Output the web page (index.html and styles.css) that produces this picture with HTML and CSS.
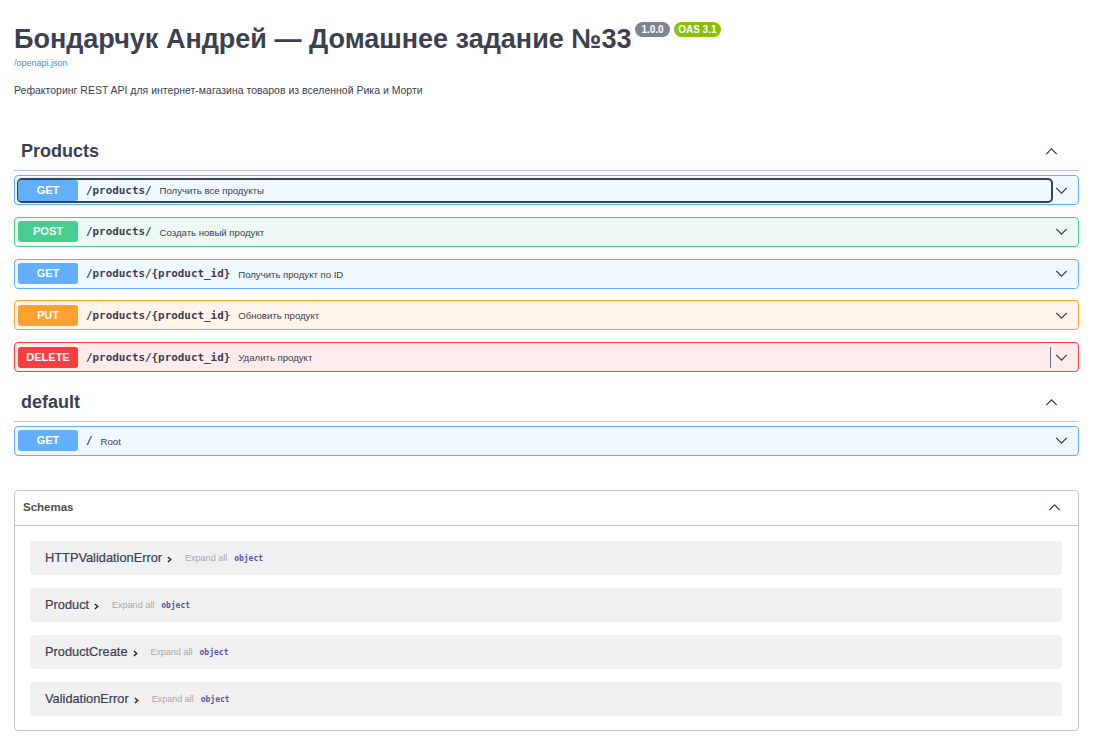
FILE: index.html
```html
<!DOCTYPE html>
<html lang="ru">
<head>
<meta charset="utf-8">
<title>Swagger UI</title>
<link rel="stylesheet" href="styles.css">
</head>
<body>
<div class="wrapper">
  <section class="info">
    <h1 class="title">Бондарчук Андрей — Домашнее задание №33<span class="badges"><span class="badge ver">1.0.0</span><span class="badge oas">OAS 3.1</span></span></h1>
    <a class="url" href="#">/openapi.json</a>
    <p class="desc">Рефакторинг REST API для интернет-магазина товаров из вселенной Рика и Морти</p>
  </section>

  <section class="tag">
    <div class="tag-head">
      <h2>Products</h2>
      <svg class="chev up" viewBox="0 0 14 8"><polyline points="1,7 7,1 13,7"/></svg>
    </div>
    <div class="op get">
      <div class="op-sum focus">
        <span class="method">GET</span>
        <span class="path">/products/</span>
        <span class="summary">Получить все продукты</span>
      </div>
      <svg class="chev down" viewBox="0 0 14 8"><polyline points="1,1 7,7 13,1"/></svg>
    </div>
    <div class="op post">
      <div class="op-sum">
        <span class="method">POST</span>
        <span class="path">/products/</span>
        <span class="summary">Создать новый продукт</span>
      </div>
      <svg class="chev down" viewBox="0 0 14 8"><polyline points="1,1 7,7 13,1"/></svg>
    </div>
    <div class="op get">
      <div class="op-sum">
        <span class="method">GET</span>
        <span class="path">/products/{product_id}</span>
        <span class="summary">Получить продукт по ID</span>
      </div>
      <svg class="chev down" viewBox="0 0 14 8"><polyline points="1,1 7,7 13,1"/></svg>
    </div>
    <div class="op put">
      <div class="op-sum">
        <span class="method">PUT</span>
        <span class="path">/products/{product_id}</span>
        <span class="summary">Обновить продукт</span>
      </div>
      <svg class="chev down" viewBox="0 0 14 8"><polyline points="1,1 7,7 13,1"/></svg>
    </div>
    <div class="op delete">
      <div class="op-sum caret">
        <span class="method">DELETE</span>
        <span class="path">/products/{product_id}</span>
        <span class="summary">Удалить продукт</span>
      </div>
      <svg class="chev down" viewBox="0 0 14 8"><polyline points="1,1 7,7 13,1"/></svg>
    </div>
  </section>

  <section class="tag">
    <div class="tag-head">
      <h2>default</h2>
      <svg class="chev up" viewBox="0 0 14 8"><polyline points="1,7 7,1 13,7"/></svg>
    </div>
    <div class="op get">
      <div class="op-sum">
        <span class="method">GET</span>
        <span class="path">/</span>
        <span class="summary">Root</span>
      </div>
      <svg class="chev down" viewBox="0 0 14 8"><polyline points="1,1 7,7 13,1"/></svg>
    </div>
  </section>

  <section class="models">
    <div class="models-head">
      <h4>Schemas</h4>
      <svg class="chev up" viewBox="0 0 14 8"><polyline points="1,7 7,1 13,7"/></svg>
    </div>
    <div class="model-list">
      <div class="model"><span class="model-name">HTTPValidationError<svg class="mchev" viewBox="0 0 6 8"><polyline points="1,1 4.5,4 1,7"/></svg></span><span class="expand">Expand all</span><span class="type">object</span></div>
      <div class="model"><span class="model-name">Product<svg class="mchev" viewBox="0 0 6 8"><polyline points="1,1 4.5,4 1,7"/></svg></span><span class="expand">Expand all</span><span class="type">object</span></div>
      <div class="model"><span class="model-name">ProductCreate<svg class="mchev" viewBox="0 0 6 8"><polyline points="1,1 4.5,4 1,7"/></svg></span><span class="expand">Expand all</span><span class="type">object</span></div>
      <div class="model"><span class="model-name">ValidationError<svg class="mchev" viewBox="0 0 6 8"><polyline points="1,1 4.5,4 1,7"/></svg></span><span class="expand">Expand all</span><span class="type">object</span></div>
    </div>
  </section>
</div>
</body>
</html>
```

FILE: styles.css
```css
html, body {
  margin: 0;
  padding: 0;
  background: #fff;
}

body {
  font-family: "Liberation Sans", Arial, sans-serif;
  color: #3b4151;
}

.wrapper {
  width: 1065px;
  padding: 0 0 20px 14px;
}

/* Info */
.info {
  padding-top: 22px;
}

.title {
  margin: 0;
  font-size: 27px;
  line-height: 34px;
  font-weight: 700;
  color: #3b4151;
  display: flex;
  align-items: flex-start;
}

.badges {
  display: flex;
  gap: 4px;
  margin-left: 4px;
}

.badge {
  display: inline-block;
  font-size: 10px;
  line-height: 15px;
  height: 15px;
  border-radius: 8px;
  color: #fff;
  font-weight: 700;
}

.ver { background: #7d8492; padding: 0 6px; }
.oas { background: #89bf04; padding: 0 4.5px; }

.url {
  display: block;
  font-size: 9px;
  line-height: 12px;
  color: #4990e2;
  text-decoration: none;
  margin-top: 1px;
}

.desc {
  margin: 14px 0 0;
  font-size: 10.5px;
  line-height: 14px;
  color: #3b4151;
}

/* Tags */
.tag {
  margin-top: 36px;
}

.tag + .tag {
  margin-top: 0;
}

.tag-head {
  height: 37px;
  border-bottom: 1px solid #c4c6cb;
  display: flex;
  align-items: center;
  justify-content: space-between;
  padding: 0 21px 0 7px;
  margin-bottom: 4px;
}

.tag-head h2 {
  margin: 0;
  font-size: 18px;
  font-weight: 700;
  color: #3b4151;
}

.chev {
  width: 13px;
  height: 7px;
  fill: none;
  stroke: #3b4151;
  stroke-width: 1.5;
}

/* Operations */
.op {
  height: 30px;
  box-sizing: border-box;
  border: 1px solid;
  border-radius: 4px;
  margin-bottom: 11.75px;
  display: flex;
  align-items: center;
  padding: 0 10px 0 3px;
}

.op-sum {
  flex: 1;
  display: flex;
  align-items: center;
  height: 21px;
  margin-right: 4px;
  border-radius: 3px;
}

.op-sum.focus {
  box-shadow: 0 0 0 2px #3b4151;
  margin-left: 1px;
}

.op-sum.focus .method { margin-left: -1px; }

.op-sum.caret {
  border-right: 1px solid #6b6f7b;
  border-radius: 0;
}

.op .chev.down {
  flex: none;
}

.method {
  width: 60px;
  height: 21px;
  line-height: 21px;
  text-align: center;
  border-radius: 3px;
  color: #fff;
  font-weight: 700;
  font-size: 11px;
  flex: none;
}

.path {
  font-family: "DejaVu Sans Mono", monospace;
  font-weight: 700;
  font-size: 10.9px;
  color: #3b4151;
  margin-left: 8px;
  margin-right: 8px;
}

.summary {
  font-size: 9.6px;
  color: #3b4151;
  margin-top: 1px;
}

.op.get { background: #eff7ff; border-color: #61affe; }
.op.get .method { background: #61affe; }
.op.post { background: #edfaf4; border-color: #49cc90; }
.op.post .method { background: #49cc90; }
.op.put { background: #fff5ea; border-color: #fca130; }
.op.put .method { background: #fca130; }
.op.delete { background: #feebeb; border-color: #f93e3e; }
.op.delete .method { background: #f93e3e; }

/* Models */
.models {
  margin-top: 34px;
  border: 1px solid #c8c8c8;
  border-radius: 4px;
}

.models-head {
  height: 34px;
  display: flex;
  align-items: center;
  justify-content: space-between;
  padding: 0 17px 0 8px;
  border-bottom: 1px solid #c8c8c8;
}

.models-head h4 {
  margin: 0;
  font-size: 11.5px;
  font-weight: 700;
  color: #505050;
  margin-top: -2px;
}

.model-list {
  display: flex;
  flex-direction: column;
  gap: 13px;
  padding: 15px 16px 14px 15px;
}

.model {
  height: 34px;
  background: #f0f0f0;
  border-radius: 4px;
  display: flex;
  align-items: center;
  padding-left: 15px;
}

.model-name {
  font-size: 12.8px;
  color: #3b4151;
  display: flex;
  align-items: center;
  margin-top: -1px;
  -webkit-text-stroke: 0.2px #3b4151;
}

.mchev {
  width: 5px;
  height: 7px;
  fill: none;
  stroke: #222;
  stroke-width: 1.6;
  margin-left: 5px;
  margin-top: 4px;
}

.expand {
  font-size: 9px;
  color: #a8a8a8;
  margin-left: 13px;
}

.type {
  font-family: "DejaVu Sans Mono", monospace;
  font-weight: 700;
  font-size: 8px;
  color: #55a;
  margin-left: 7px;
  margin-top: 2px;
}
```
